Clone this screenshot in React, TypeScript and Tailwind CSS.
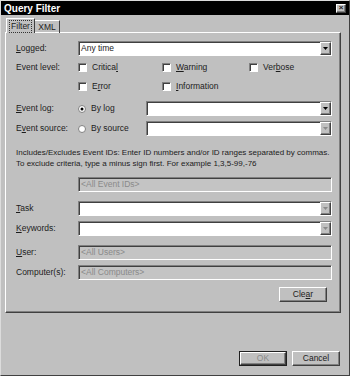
import React from "react";

const raised =
  "border border-t-white border-l-white border-r-[#404040] border-b-[#404040] shadow-[inset_-1px_-1px_0_#808080]";
const sunken =
  "border border-t-[#808080] border-l-[#808080] border-r-white border-b-white shadow-[inset_1px_1px_0_#404040]";

const Arrow = ({ dim }: { dim?: boolean }) => (
  <svg width="5" height="3" viewBox="0 0 5 3">
    <path d="M0 0h5L2.5 3z" fill={dim ? "#8a8a8a" : "#000"} />
  </svg>
);

const Select = ({ text, dim, className = "" }: { text?: string; dim?: boolean; className?: string }) => (
  <div className={`h-[15px] bg-white flex items-stretch ${sunken} ${className}`}>
    <div className="flex-1 pl-[2px] flex items-center">{text}</div>
    <div className={`w-[11px] bg-[#c0c0c0] flex items-center justify-center ${raised}`}>
      <Arrow dim={dim} />
    </div>
  </div>
);

const Field = ({ text }: { text: string }) => (
  <div className={`flex-1 h-[15px] bg-[#c4c4c4] flex items-center pl-[2px] text-[#8a8a8a] ${sunken}`}>
    {text}
  </div>
);

const Check = ({ label }: { label: React.ReactNode }) => (
  <div className="flex items-center gap-[5px]">
    <div className={`w-[9px] h-[9px] bg-white ${sunken}`} />
    <span>{label}</span>
  </div>
);

const Radio = ({ label, on }: { label: string; on?: boolean }) => (
  <div className="w-[68px] flex items-center gap-[5px]">
    <svg width="8" height="8" viewBox="0 0 8 8">
      <circle cx="4" cy="4" r="3.5" fill="#fff" stroke="#808080" />
      {on && <circle cx="4" cy="4" r="1.5" fill="#000" />}
    </svg>
    <span>{label}</span>
  </div>
);

const Label = ({ children }: { children?: React.ReactNode }) => (
  <div className="w-[62px] shrink-0">{children}</div>
);

export default function App() {
  return (
    <div className="w-[350px] h-[376px] bg-[#c0c0c0] flex flex-col border border-t-[#dcdcdc] border-l-[#dcdcdc] border-r-[#404040] border-b-[#404040] font-['Liberation_Sans',Arial,sans-serif] text-[8.5px] leading-[11px] text-[#1c1c1c]">
      {/* title bar */}
      <div className="h-[14px] bg-black flex items-center justify-between pl-[3px] pr-[3px]">
        <span className="text-white font-bold text-[10px]">Query Filter</span>
        <div className={`w-[10px] h-[9px] bg-[#c0c0c0] flex items-center justify-center text-[8px] leading-none font-bold ${raised}`}>
          ×
        </div>
      </div>

      {/* tabs */}
      <div className="mt-[3px] pl-[5px] h-[15px] flex items-end relative z-10 -mb-px">
        <div className="w-[29px] h-[15px] bg-[#c0c0c0] border-t border-l border-r border-t-white border-l-white border-r-[#404040] flex items-center justify-center">
          <span className="outline outline-1 outline-dotted outline-[#333] px-[1px]">Filter</span>
        </div>
        <div className="w-[25px] h-[13px] border-t border-r border-t-white border-r-[#404040] flex items-center justify-center">
          XML
        </div>
      </div>

      {/* panel */}
      <div className="ml-[4px] w-[336px] h-[281px] border border-t-white border-l-white border-r-[#404040] border-b-[#404040] shadow-[inset_-1px_-1px_0_#808080] pl-[10px] pr-[8px] flex flex-col">
        <div className="mt-[8px] h-[15px] flex items-center">
          <Label>
            <u>L</u>ogged:
          </Label>
          <Select text="Any time" className="flex-1" />
        </div>

        <div className="mt-[4px] h-[15px] flex items-center">
          <Label>Event level:</Label>
          <div className="w-[84px]">
            <Check label={<>Critica<u>l</u></>} />
          </div>
          <div className="w-[87px]">
            <Check label={<><u>W</u>arning</>} />
          </div>
          <Check label={<>Ver<u>b</u>ose</>} />
        </div>

        <div className="mt-[4px] h-[15px] flex items-center">
          <Label />
          <div className="w-[84px]">
            <Check label={<>E<u>r</u>ror</>} />
          </div>
          <Check label={<><u>I</u>nformation</>} />
        </div>

        <div className="mt-[7px] h-[15px] flex items-center">
          <Label>
            <u>E</u>vent log:
          </Label>
          <Radio label="By log" on />
          <Select className="flex-1" />
        </div>

        <div className="mt-[5px] h-[15px] flex items-center">
          <Label>
            E<u>v</u>ent source:
          </Label>
          <Radio label="By source" />
          <Select className="flex-1" dim />
        </div>

        <p className="mt-[11px] whitespace-nowrap text-[8px]">
          Includes/Excludes Event IDs: Enter ID numbers and/or ID ranges separated by commas.
          <br />
          To exclude criteria, type a minus sign first. For example 1,3,5-99,-76
        </p>

        <div className="mt-[8px] h-[15px] flex items-center">
          <Label />
          <Field text="<All Event IDs>" />
        </div>

        <div className="mt-[9px] h-[15px] flex items-center">
          <Label>
            <u>T</u>ask
          </Label>
          <Select className="flex-1" dim />
        </div>

        <div className="mt-[5px] h-[15px] flex items-center">
          <Label>
            <u>K</u>eywords:
          </Label>
          <Select className="flex-1" dim />
        </div>

        <div className="mt-[9px] h-[15px] flex items-center">
          <Label>
            <u>U</u>ser:
          </Label>
          <Field text="<All Users>" />
        </div>

        <div className="mt-[5px] h-[15px] flex items-center">
          <Label>Computer(s):</Label>
          <Field text="<All Computers>" />
        </div>

        <div className="mt-[7px] flex justify-end pr-[5px]">
          <div className={`w-[48px] h-[15px] flex items-center justify-center ${raised}`}>
            Cle<u>a</u>r
          </div>
        </div>
      </div>

      {/* dialog buttons */}
      <div className="mt-[38px] flex justify-end gap-[5px] pr-[9px]">
        <div className="w-[48px] h-[15px] border border-[#202020] flex">
          <div className={`flex-1 flex items-center justify-center text-[#8a8a8a] ${raised}`}>OK</div>
        </div>
        <div className={`w-[48px] h-[15px] flex items-center justify-center ${raised}`}>Cancel</div>
      </div>
    </div>
  );
}
